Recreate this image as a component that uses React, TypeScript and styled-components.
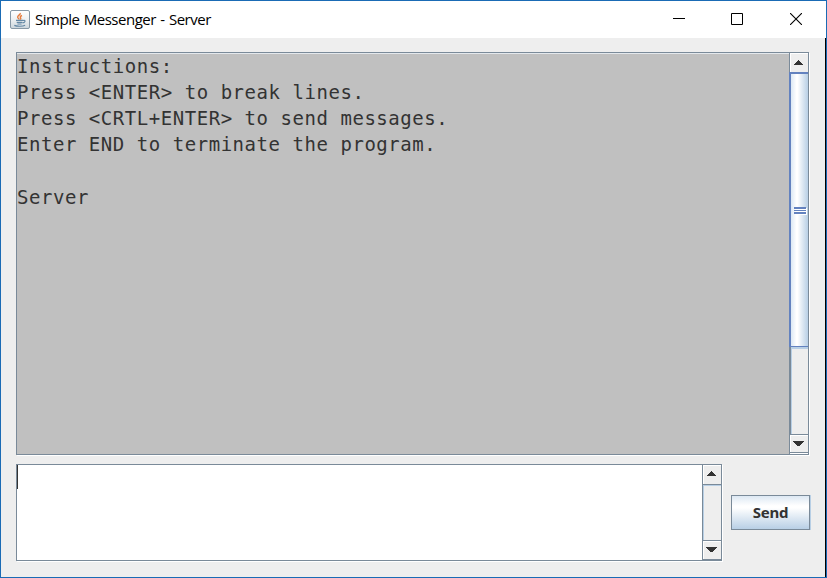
import React from "react";
import styled, { createGlobalStyle } from "styled-components";

const GlobalStyle = createGlobalStyle`
  * { box-sizing: border-box; }
  body { margin: 0; overflow: hidden; }
`;

const steel = "#7a8a99";
const face = "#eeeeee";
const ink = "#333333";

const Frame = styled.div`
  width: 827px;
  height: 578px;
  border: 1px solid #1a6bb5;
  background: ${face};
  display: flex;
  flex-direction: column;
`;

const TitleBar = styled.header`
  height: 37px;
  flex: none;
  display: flex;
  align-items: center;
  background: #ffffff;
  padding: 0 1px 0 9px;
`;

const Title = styled.h1`
  margin: 0 0 0 5px;
  padding-bottom: 2px;
  flex: 1;
  font: 400 15px/20px "Open Sans", "Noto Sans", sans-serif;
  letter-spacing: -0.48px;
  word-spacing: 0.9px;
  color: #000000;
  white-space: nowrap;
`;

const WindowButton = styled.button`
  width: 58.5px;
  height: 37px;
  padding: 0 0 2px;
  border: 0;
  background: none;
  display: flex;
  align-items: center;
  justify-content: center;
`;

const Content = styled.main`
  flex: 1;
  border-right: 1px solid #000000;
  padding: 14px 14px 0 15px;
  display: flex;
  flex-direction: column;
  gap: 8px;
`;

const ScrollPane = styled.section<{ $width: number; $height: number }>`
  width: ${(p) => p.$width}px;
  height: ${(p) => p.$height}px;
  flex: none;
  border: 1px solid ${steel};
  box-shadow: 1px 1px 0 #ffffff;
  display: flex;
`;

const Transcript = styled.div`
  flex: 1;
  border-top: 1px solid #e4e8ec;
  background: #c0c0c0;
  color: ${ink};
  font: 400 19px/26px "DejaVu Sans Mono", monospace;
  letter-spacing: 0.54px;
`;

const Message = styled.pre`
  margin: 0;
  font: inherit;

  &:first-child {
    margin-top: -1px;
  }

  & + & {
    margin-top: 27px;
  }
`;

const MessageInput = styled.div`
  flex: 1;
  background: #ffffff;
`;

const Caret = styled.div`
  width: 1px;
  height: 24px;
  background: ${ink};
`;

const ScrollBar = styled.div`
  width: 19px;
  flex: none;
  background: ${face};
  display: flex;
  flex-direction: column;
`;

const ArrowButton = styled.div<{ $pad: number; $base?: "flush" | "raised" }>`
  height: 19px;
  flex: none;
  border-left: 1px solid ${steel};
  box-shadow: ${(p) =>
    p.$base === "raised"
      ? `inset 0 -1px 0 #ffffff, inset 0 -2px 0 ${steel}, `
      : p.$base === "flush"
        ? `inset 0 -1px 0 ${steel}, `
        : ""} inset 1px 1px 0 #ffffff;
  padding: ${(p) => p.$pad}px 0 0 3px;
  line-height: 0;
`;

const Track = styled.div<{ $edge: number }>`
  flex: 1;
  border-left: ${(p) => p.$edge}px solid ${steel};
  border-bottom: 1px solid ${steel};
  box-shadow: inset 1px 0 0 #b8cfe5, inset 0 ${(p) => p.$edge}px 0 #b8cfe5;
`;

const TrackTop = styled.div`
  height: 1px;
  flex: none;
  background: ${steel};
`;

const Thumb = styled.div`
  height: 275px;
  flex: none;
  border: solid #6382bf;
  border-width: 2px 0 1px 2px;
  background: linear-gradient(90deg, #dce8f4 0, #ffffff 32%, #ffffff 38%, #b8cfe5 100%);
  display: flex;
  align-items: center;
  padding: 1px 0 0 3px;
`;

const SendRow = styled.div`
  display: flex;
  gap: 9px;
  align-items: center;
  margin-top: 1px;
`;

const SendButton = styled.button`
  width: 79px;
  height: 35px;
  padding: 0 0 1px;
  border: 1px solid ${steel};
  box-shadow: 1px 0 0 #b8cfe5;
  background: linear-gradient(180deg, #dde8f3 0, #ffffff 30%, #ffffff 36%, #b8cfe5 100%);
  color: ${ink};
  font: 700 15px/20px "Noto Sans", "Open Sans", sans-serif;
  letter-spacing: -0.2px;
`;

const JavaIcon = () => (
  <svg width="20" height="20" viewBox="0 0 20 20" fill="none">
    <defs>
      <linearGradient id="tile" x1="0" y1="0" x2="0" y2="1">
        <stop offset="0" stopColor="#ffffff" />
        <stop offset="0.5" stopColor="#edf0f2" />
        <stop offset="1" stopColor="#cbd5dc" />
      </linearGradient>
    </defs>
    <rect x="0.5" y="0.5" width="19" height="18" rx="1.5" fill="url(#tile)" stroke="#8798a6" />
    <path d="M10.2 3c.8 1.6-3 2.6-2.5 4.3.2.9 1.3 1.5 1.6 2.2M12 5.5c-2.2.8-2 1.7-1.3 2.5.3.5 0 1.1-.5 1.5" stroke="#e57b3d" strokeWidth="1.4" />
    <path d="M6 10.4h7.2M6.7 12.3h5.6M7.4 14h4.2M4.3 15.4c2.5 1.1 8.5 1.1 10.8-.2M13.2 10.5c3-.7 2 2.3-.7 2.4" stroke="#6488a5" strokeWidth="1.15" />
  </svg>
);

const Arrow = ({ down = false }: { down?: boolean }) => (
  <svg width="11" height="5" viewBox="0 0 11 5" fill={ink} shapeRendering="crispEdges">
    {down ? (
      <path d="M0 0H11V1H10V2H9V3H8V4H7V5H4V4H3V3H2V2H1V1H0Z" />
    ) : (
      <path d="M5 0H6V1H7V2H8V3H9V4H10V5H1V4H2V3H3V2H4V1H5Z" />
    )}
  </svg>
);

const Grip = () => (
  <svg width="13" height="8" viewBox="0 0 13 8" shapeRendering="crispEdges">
    <path d="M1 1H13V8H1Z" fill="#ffffff" />
    <path d="M0 0H12V2H0ZM0 3H12V4H0ZM0 5H12V7H0Z" fill="#6382bf" />
  </svg>
);

const instructions = `Instructions:
Press <ENTER> to break lines.
Press <CRTL+ENTER> to send messages.
Enter END to terminate the program.`;

export default function App() {
  return (
    <>
      <GlobalStyle />
      <Frame>
        <TitleBar>
          <JavaIcon />
          <Title>Simple Messenger - Server</Title>
          <WindowButton aria-label="Minimize">
            <svg width="12" height="12" stroke="#000"><path d="M0 5.5H12" /></svg>
          </WindowButton>
          <WindowButton aria-label="Maximize">
            <svg width="12" height="12" fill="none" stroke="#000"><path d="M.5.5H11.5V11.5H.5Z" /></svg>
          </WindowButton>
          <WindowButton aria-label="Close">
            <svg width="12" height="12" stroke="#000" strokeWidth="1.1"><path d="M0 0L12 12M12 0L0 12" /></svg>
          </WindowButton>
        </TitleBar>
        <Content>
          <ScrollPane $width={793} $height={403}>
            <Transcript>
              <Message>{instructions}</Message>
              <Message>Server</Message>
            </Transcript>
            <ScrollBar>
              <ArrowButton $pad={7}><Arrow /></ArrowButton>
              <Thumb><Grip /></Thumb>
              <Track $edge={2} />
              <ArrowButton $pad={6} $base="raised"><Arrow down /></ArrowButton>
            </ScrollBar>
          </ScrollPane>
          <SendRow>
            <ScrollPane $width={706} $height={97}>
              <MessageInput><Caret /></MessageInput>
              <ScrollBar>
                <ArrowButton $pad={6}><Arrow /></ArrowButton>
                <TrackTop />
                <Track $edge={1} />
                <ArrowButton $pad={6} $base="flush"><Arrow down /></ArrowButton>
              </ScrollBar>
            </ScrollPane>
            <SendButton>Send</SendButton>
          </SendRow>
        </Content>
      </Frame>
    </>
  );
}
